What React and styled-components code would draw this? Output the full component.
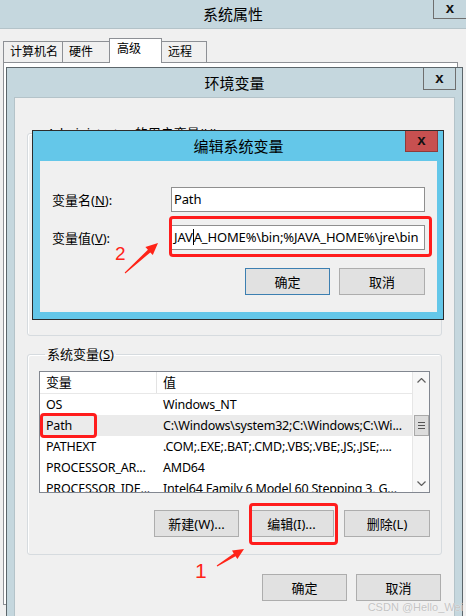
import React from "react";
import styled, { createGlobalStyle } from "styled-components";

const GlobalStyle = createGlobalStyle`
  html, body { margin: 0; padding: 0; }
  body {
    width: 466px;
    height: 616px;
    overflow: hidden;
    background: #f0f0f0;
    font-family: "Noto Sans", "Noto Sans CJK SC", sans-serif;
    font-size: 13px;
    color: #000;
  }
  * { box-sizing: border-box; }
`;

const Desktop = styled.div`
    position: relative;
    width: 466px;
    height: 616px;
    overflow: hidden;
    background: #f0f0f0;
`;

/* ---------- window chrome ---------- */

const TitleBar = styled.div`
    display: grid;
    grid-template-columns: 1fr auto 1fr;
    height: ${p => p.h}px;
    background: ${p => p.bg};
`;

const TitleText = styled.span`
    grid-column: 2;
    align-self: center;
    font-size: 15px;
    line-height: 18px;
    white-space: nowrap;
`;

const CloseBox = styled.div`
    grid-column: 3;
    justify-self: end;
    align-self: start;
    width: 33px;
    height: ${p => p.h}px;
    margin-right: ${p => p.mr}px;
    display: flex;
    align-items: center;
    justify-content: center;
    background: ${p => p.bg};
    border: 1px solid ${p => p.bc};
    border-top: none;
    ${p => p.noRight && "border-right: none;"}
    font-family: "Liberation Sans", sans-serif;
    font-weight: 700;
    font-size: 15px;
    line-height: 1;
    padding-bottom: 3px;
    color: #111;
`;

/* ---------- system properties (background window) ---------- */

const SysWindow = styled.div`
    width: 466px;
    height: 616px;
    display: flex;
    flex-direction: column;
`;

const SysBody = styled.div`
    flex: 1;
    border-top: 1px solid #b4c3c9;
    padding: 9px 8px 0 3px;
`;

const TabRow = styled.div`
    display: flex;
    align-items: flex-end;
    height: 25px;
    padding-left: 1px;
    margin-bottom: -1px;
    position: relative;
    z-index: 1;
`;

const Tab = styled.div`
    width: ${p => p.w}px;
    height: ${p => (p.active ? 25 : 22)}px;
    margin-left: -1px;
    border: 1px solid #8d9095;
    border-bottom: ${p => (p.active ? "none" : "1px solid #8d9095")};
    background: ${p => (p.active ? "#fff" : "#f0f0f0")};
    font-size: 12px;
    line-height: 20px;
    padding-left: ${p => (p.active ? 7 : 6)}px;
    white-space: nowrap;
`;

const TabPanel = styled.div`
    width: 455px;
    height: 543px;
    background: #fff;
    border: 1px solid #8d9095;
`;

/* ---------- environment variables window ---------- */

const EnvWindow = styled.div`
    position: absolute;
    left: 6px;
    top: 67px;
    width: 457px;
    height: 580px;
    border: 1px solid #5c666b;
    background: #c5d7de;
    padding: 0 7px 7px 7px;
    display: flex;
    flex-direction: column;
`;

const EnvBody = styled.div`
    flex: 1;
    background: #f0f0f0;
    border: 1px solid #b4c3c9;
    padding: 26px 12px 0 12px;
    display: flex;
    flex-direction: column;
`;

const Group = styled.fieldset`
    margin: ${p => p.mt}px 0 0 0;
    padding: 0 11px 17px 11px;
    min-width: 0;
    height: ${p => (p.h ? `${p.h}px` : "auto")};
    border: 1px solid #d6dbdf;
    border-radius: 3px;
    box-shadow: inset 1px 1px 0 #fff;
`;

const Legend = styled.legend`
    margin-left: 6px;
    padding: 0 2px;
    font-size: 13px;
    line-height: 18px;
`;

const ListView = styled.div`
    margin-top: 8px;
    height: 122px;
    border: 1px solid #828790;
    background: #fff;
    display: grid;
    grid-template-columns: 1fr 17px;
    overflow: hidden;
    font-size: 12.5px;
    letter-spacing: -0.2px;
`;

const ListRows = styled.div`
    display: flex;
    flex-direction: column;
    overflow: hidden;
`;

const ListRow = styled.div`
    display: grid;
    grid-template-columns: 117px 1fr;
    flex: none;
    height: ${p => (p.header ? 22 : 21)}px;
    background: ${p => (p.selected ? "#ebebeb" : "#fff")};
    border-bottom: ${p => (p.header ? "1px solid #e8e8e8" : "none")};
    line-height: 21px;
    font-size: ${p => (p.header ? 13 : 12.5)}px;
`;

const Cell = styled.div`
    padding-left: 6px;
    white-space: nowrap;
    overflow: hidden;
    border-right: ${p => (p.divider ? "1px solid #e3e3e3" : "none")};
`;

const ScrollBar = styled.div`
    display: flex;
    flex-direction: column;
    background: #f7f7f7;
    border-left: 1px solid #e6e6e6;
`;

const ScrollArrow = styled.div`
    height: 17px;
    display: flex;
    align-items: center;
    justify-content: center;
`;

const ScrollTrack = styled.div`
    flex: 1;
    display: flex;
    flex-direction: column;
    align-items: center;
`;

const Thumb = styled.div`
    width: 15px;
    height: 21px;
    margin-top: ${p => p.offset}px;
    background: #dcdcdc;
    border: 1px solid #a9a9a9;
    display: flex;
    flex-direction: column;
    align-items: center;
    justify-content: center;
    gap: 2px;
`;

const Grip = styled.span`
    width: 7px;
    height: 1px;
    background: #555;
`;

const ButtonRow = styled.div`
    display: flex;
    justify-content: flex-end;
    gap: ${p => p.gap}px;
    margin-top: ${p => p.mt}px;
    margin-right: ${p => p.mr || 0}px;
`;

const Button = styled.div`
    width: ${p => p.w || 85}px;
    height: 27px;
    display: flex;
    align-items: center;
    justify-content: center;
    background: #e1e1e1;
    border: 1px solid ${p => (p.primary ? "#3c7fb1" : "#adadad")};
    font-size: 13px;
    white-space: nowrap;
`;

/* ---------- edit system variable dialog ---------- */

const EditDialog = styled.div`
    position: absolute;
    left: 32px;
    top: 130px;
    width: 412px;
    height: 190px;
    border: 1px solid #2c2c2c;
    background: #64c7e9;
    padding: 0 6px 7px 7px;
    display: flex;
    flex-direction: column;
`;

const EditBody = styled.div`
    flex: 1;
    background: #f0f0f0;
    padding: 26px 12px 0 12px;
    display: grid;
    grid-template-columns: 119px 1fr;
    grid-auto-rows: min-content;
    row-gap: 13px;
    align-items: center;
`;

const FieldLabel = styled.label`
    font-size: 13px;
    white-space: nowrap;
    u { text-decoration: underline; }
`;

const TextBox = styled.div`
    height: 25px;
    border: 1px solid #8f8f8f;
    background: #fff;
    padding-left: 2px;
    line-height: 23px;
    letter-spacing: -0.15px;
    white-space: nowrap;
    overflow: hidden;
`;

const Caret = styled.span`
    display: inline-block;
    width: 1px;
    height: 16px;
    background: #000;
    vertical-align: -3px;
`;

const EditButtons = styled(ButtonRow)`
    grid-column: 1 / -1;
`;

/* ---------- annotations ---------- */

const RedBox = styled.div`
    position: absolute;
    left: ${p => p.x}px;
    top: ${p => p.y}px;
    width: ${p => p.w}px;
    height: ${p => p.h}px;
    border: 3px solid #ff1c1c;
    border-radius: 4px;
`;

const StepNumber = styled.span`
    position: absolute;
    left: ${p => p.x}px;
    top: ${p => p.y}px;
    font-family: "Liberation Sans", sans-serif;
    font-size: ${p => p.size}px;
    line-height: 1;
    color: #ff2418;
`;

const Overlay = styled.svg`
    position: absolute;
    left: 0;
    top: 0;
    pointer-events: none;
`;

const Watermark = styled.span`
    position: absolute;
    right: 3px;
    bottom: 3px;
    font-family: "Liberation Sans", sans-serif;
    font-size: 11px;
    color: #c3c3c3;
    text-shadow: 0 0 1px #fff;
`;

function arrowPoints(x1, y1, x2, y2, head, wing, shaft) {
    const dx = x2 - x1, dy = y2 - y1;
    const len = Math.hypot(dx, dy);
    const ux = dx / len, uy = dy / len;
    const nx = -uy, ny = ux;
    const bx = x2 - ux * head, by = y2 - uy * head;
    const p = (x, y) => `${x.toFixed(1)},${y.toFixed(1)}`;
    return [
        p(x1 + nx * 0.5, y1 + ny * 0.5),
        p(bx + nx * shaft, by + ny * shaft),
        p(bx + nx * wing, by + ny * wing),
        p(x2, y2),
        p(bx - nx * wing, by - ny * wing),
        p(bx - nx * shaft, by - ny * shaft),
        p(x1 - nx * 0.5, y1 - ny * 0.5),
    ].join(" ");
}

const Chevron = ({ down }) => (
    <svg width="9" height="5" viewBox="0 0 9 5">
        <polyline
            points={down ? "0.5,0.5 4.5,4.5 8.5,0.5" : "0.5,4.5 4.5,0.5 8.5,4.5"}
            fill="none"
            stroke="#5f5f5f"
            strokeWidth="1.2"
        />
    </svg>
);

const rows = [
    ["OS", "Windows_NT"],
    ["Path", "C:\\Windows\\system32;C:\\Windows;C:\\Wi..."],
    ["PATHEXT", ".COM;.EXE;.BAT;.CMD;.VBS;.VBE;.JS;.JSE;...."],
    ["PROCESSOR_AR...", "AMD64"],
    ["PROCESSOR_IDE...", "Intel64 Family 6 Model 60 Stepping 3, G..."],
];

const App = () => {
    return (
        <Desktop>
            <GlobalStyle />

            <SysWindow>
                <TitleBar h={28} bg="#c5d7de">
                    <TitleText>系统属性</TitleText>
                    <CloseBox h={19} mr={0} bg="#c5d7de" bc="#6e6e6e" noRight>x</CloseBox>
                </TitleBar>
                <SysBody>
                    <TabRow>
                        <Tab w={60}>计算机名</Tab>
                        <Tab w={48}>硬件</Tab>
                        <Tab w={53} active>高级</Tab>
                        <Tab w={46}>远程</Tab>
                    </TabRow>
                    <TabPanel />
                </SysBody>
            </SysWindow>

            <EnvWindow>
                <TitleBar h={29} bg="#c5d7de">
                    <TitleText>环境变量</TitleText>
                    <CloseBox h={22} mr={-1} bg="#c5d7de" bc="#6e6e6e">x</CloseBox>
                </TitleBar>
                <EnvBody>
                    <Group h={212} mt={0}>
                        <Legend>Administrator 的用户变量(<u>U</u>)</Legend>
                    </Group>
                    <Group mt={9}>
                        <Legend>系统变量(<u>S</u>)</Legend>
                        <ListView>
                            <ListRows>
                                <ListRow header>
                                    <Cell divider>变量</Cell>
                                    <Cell>值</Cell>
                                </ListRow>
                                {rows.map(([name, value]) => (
                                    <ListRow key={name} selected={name === "Path"}>
                                        <Cell>{name}</Cell>
                                        <Cell>{value}</Cell>
                                    </ListRow>
                                ))}
                            </ListRows>
                            <ScrollBar>
                                <ScrollArrow><Chevron /></ScrollArrow>
                                <ScrollTrack>
                                    <Thumb offset={26}>
                                        <Grip /><Grip /><Grip />
                                    </Thumb>
                                </ScrollTrack>
                                <ScrollArrow><Chevron down /></ScrollArrow>
                            </ScrollBar>
                        </ListView>
                        <ButtonRow gap={10} mt={17}>
                            <Button>新建(W)...</Button>
                            <Button>编辑(I)...</Button>
                            <Button w={86}>删除(L)</Button>
                        </ButtonRow>
                    </Group>
                    <ButtonRow gap={9} mt={19} mr={1}>
                        <Button>确定</Button>
                        <Button>取消</Button>
                    </ButtonRow>
                </EnvBody>
            </EnvWindow>

            <EditDialog>
                <TitleBar h={30} bg="#64c7e9">
                    <TitleText>编辑系统变量</TitleText>
                    <CloseBox h={21} mr={-1} bg="#c75050" bc="#8f3a3a">x</CloseBox>
                </TitleBar>
                <EditBody>
                    <FieldLabel>变量名(<u>N</u>):</FieldLabel>
                    <TextBox>Path</TextBox>
                    <FieldLabel>变量值(<u>V</u>):</FieldLabel>
                    <TextBox>
                        JAV<Caret />A_HOME%\bin;%JAVA_HOME%\jre\bin
                    </TextBox>
                    <EditButtons gap={9} mt={5}>
                        <Button primary>确定</Button>
                        <Button w={86}>取消</Button>
                    </EditButtons>
                </EditBody>
            </EditDialog>

            <RedBox x={169} y={216} w={263} h={41} />
            <RedBox x={40} y={413} w={57} h={25} />
            <RedBox x={249} y={503} w={89} h={42} />

            <Overlay width="466" height="616">
                <polygon points={arrowPoints(125, 273, 158, 243, 12, 5.5, 1.8)} fill="#ff2418" />
                <polygon points={arrowPoints(217, 566, 244, 549, 11, 5, 1.6)} fill="#ff2418" />
            </Overlay>
            <StepNumber x={115} y={244} size={19}>2</StepNumber>
            <StepNumber x={195} y={560} size={21}>1</StepNumber>

            <Watermark>CSDN @Hello_Wei</Watermark>
        </Desktop>
    );
};

export default App;
